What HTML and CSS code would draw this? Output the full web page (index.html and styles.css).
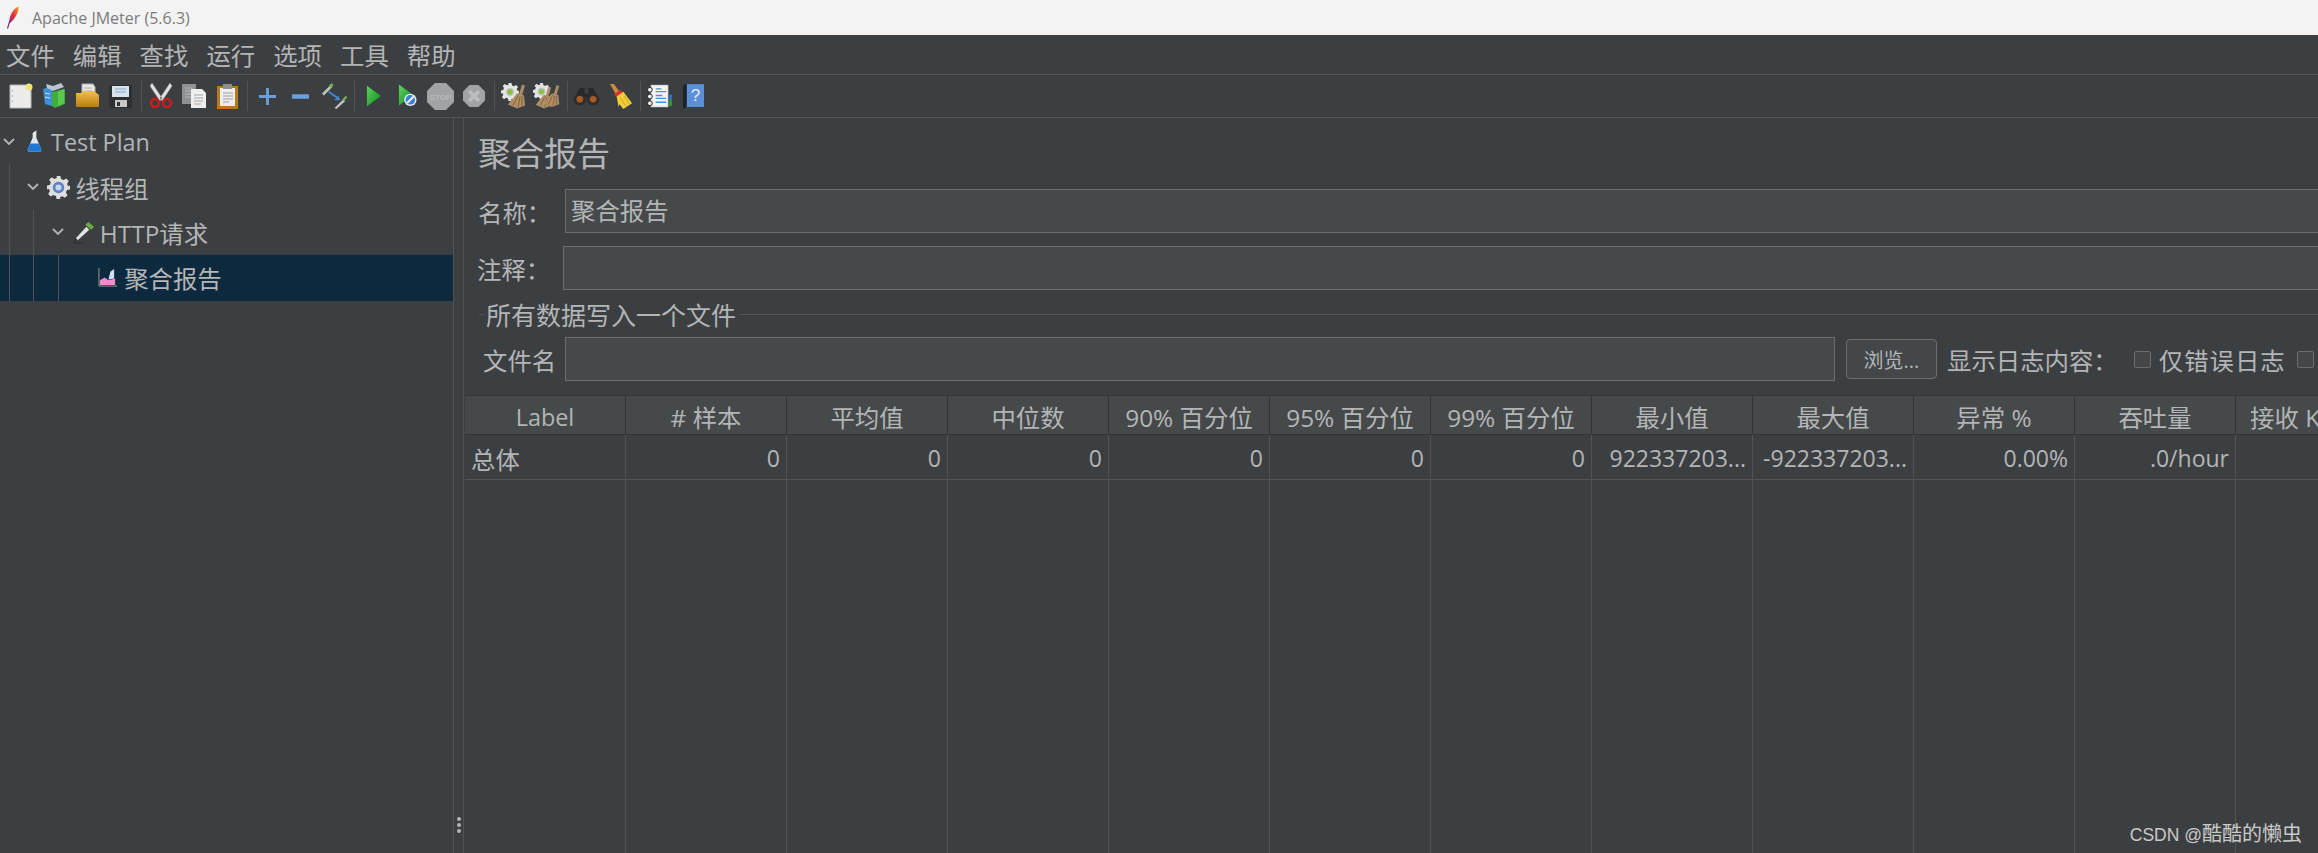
FILE: index.html
```html
<!DOCTYPE html>
<html>
<head>
	<meta charset="utf-8">
	<meta name="viewport" content="width=device-width, initial-scale=1">
	<title>Apache JMeter (5.6.3)</title>
	<link rel="stylesheet" href="styles.css">
</head>
<body>
	<svg class="defs" width="0" height="0">
		<defs>
			<linearGradient id="feather" x1="1" y1="0" x2="0" y2="1">
				<stop offset="0" stop-color="#f6a623"/>
				<stop offset="0.5" stop-color="#e8323c"/>
				<stop offset="1" stop-color="#8e2a8c"/>
			</linearGradient>
			<linearGradient id="play" x1="0" y1="0" x2="1" y2="1">
				<stop offset="0" stop-color="#5fd35f"/>
				<stop offset="1" stop-color="#0a8a1e"/>
			</linearGradient>
			<linearGradient id="folder" x1="0" y1="0" x2="0" y2="1">
				<stop offset="0" stop-color="#f2c04e"/>
				<stop offset="1" stop-color="#b97c12"/>
			</linearGradient>
			<symbol id="gear" viewBox="0 0 24 24">
				<path d="M10 0h4l.7 3.200 2.600 1.100 2.700-1.800 2.800 2.800-1.800 2.700 1.100 2.600L24 10v4l-3.200.7-1.100 2.600 1.800 2.700-2.800 2.800-2.700-1.800-2.600 1.100L14 24h-4l-.7-3.200-2.600-1.100L4 21.500 1.200 18.700 3 16l-1.100-2.600L0 14v-4l2.900-.7L4 6.700 2.200 4 5 1.200l2.700 1.800 2.600-1.100z" fill="#e4e4e4"/>
				<circle cx="12" cy="12" r="5.500" fill="#c4c4c4"/>
				<circle cx="12" cy="12" r="3.600" fill="#86c440"/>
			</symbol>
			<symbol id="besom" viewBox="0 0 24 24">
				<path d="M18 0l3 1-3 10-3-1z" fill="#a98a62"/>
				<path d="M13 9l7 2 1 10-8 3-9-4z" fill="#b08d64"/>
				<path d="M14 11l-5 10M16 12l-2 11M18 12l0 10" stroke="#7f6440" fill="none"/>
			</symbol>
		</defs>
	</svg>

	<div class="titlebar">
		<svg class="titlebar-icon" viewBox="0 0 14 24" width="14" height="24"><path d="M12.500 0.500C8 2 4.500 8 3.500 13c-.4 2-.6 3.500-.3 4.500C6 16 9 12 11 8c1-2 2-5 1.500-7.500z" fill="url(#feather)"/><path d="M3.800 15L1.500 22.500" stroke="#7a2a88" stroke-width="1.200" fill="none"/></svg>
		<span>Apache JMeter (5.6.3)</span>
	</div>

	<div class="menubar">
		<span>文件</span><span>编辑</span><span>查找</span><span>运行</span><span>选项</span><span>工具</span><span>帮助</span>
	</div>

	<div class="toolbar">
		<!-- new -->
		<div class="tool"><svg viewBox="0 0 24 26" width="24" height="26"><path d="M1 2h21v23H1z" fill="#ececec" stroke="#b5b5b5"/><circle cx="20" cy="4" r="3.500" fill="#f4e27a"/><path d="M3 8h1M3 13h1M3 18h1" stroke="#888"/></svg></div>
		<!-- templates -->
		<div class="tool"><svg viewBox="0 0 24 26" width="24" height="26"><path d="M1 6l9-3v20L3 21z" fill="#3f8fd6"/><path d="M10 9l13-3v15l-10 4-3-2z" fill="#3fae3a"/><path d="M16 8l6-2v14l-6 3z" fill="#5cc84f"/><path d="M4 1l7 2 8-3 3 4-11 4-6-3z" fill="#b9c6d2"/><path d="M3 10l5 1M3 14l5 1" stroke="#bfe0f7"/></svg></div>
		<!-- open -->
		<div class="tool"><svg viewBox="0 0 26 26" width="26" height="26"><path d="M7 1h11l2 3v9H7z" fill="#e8e8e8" stroke="#b0b0b0"/><path d="M9 5h8M9 8h8" stroke="#aaa"/><path d="M1 10h5l2-2h11l5 4v11a1 1 0 0 1-1 1H2a1 1 0 0 1-1-1z" fill="url(#folder)"/></svg></div>
		<!-- save -->
		<div class="tool"><svg viewBox="0 0 24 26" width="24" height="26"><path d="M0 2h23v23H2l-2-2z" fill="#2e2f31"/><path d="M3 3h17v11H3z" fill="#d9e3ee"/><path d="M6 6h11M6 9h11" stroke="#7fa8cf"/><path d="M6 17h12v7H6z" fill="#c9c9c9"/><path d="M8 19h3v4H8z" fill="#333"/></svg></div>
		<div class="tool-sep"></div>
		<!-- cut -->
		<div class="tool"><svg viewBox="0 0 24 26" width="24" height="26"><path d="M3 0l10 15-2 3L1 3zM21 0L11 15l2 3L23 3z" fill="#e2e2e2" stroke="#999" stroke-width=".5"/><circle cx="6" cy="20" r="4" fill="none" stroke="#d01a1a" stroke-width="2.400"/><circle cx="18" cy="20" r="4" fill="none" stroke="#d01a1a" stroke-width="2.400"/></svg></div>
		<!-- copy -->
		<div class="tool"><svg viewBox="0 0 26 26" width="26" height="26"><path d="M1 1h14v20H1z" fill="#8e9092"/><path d="M4 5h8M4 8h8M4 11h8M4 14h8" stroke="#b4b5b6"/><path d="M10 6h11l4 4v15H10z" fill="#eeeeee"/><path d="M13 12h9M13 15h9M13 18h9M13 21h7" stroke="#a8a8a8"/></svg></div>
		<!-- paste -->
		<div class="tool"><svg viewBox="0 0 22 26" width="22" height="26"><path d="M0 3h21v23H0z" fill="#b8791f"/><path d="M3 5h15v18H3z" fill="#ededed"/><path d="M6 1h9v5H6z" fill="#8d8f91"/><path d="M6 10h10M6 13h10M6 16h10M6 19h6" stroke="#9d9d9d"/></svg></div>
		<div class="tool-sep"></div>
		<!-- add, remove, toggle -->
		<div class="tool"><svg viewBox="0 0 18 18" width="17" height="17"><path d="M7.500 0h3v7.500H18v3h-7.500V18h-3v-7.500H0v-3h7.500z" fill="#6ca0dc"/></svg></div>
		<div class="tool"><svg viewBox="0 0 18 5" width="17" height="5"><rect width="18" height="5" rx="1" fill="#6ca0dc"/></svg></div>
		<div class="tool"><svg viewBox="0 0 28 28" width="27" height="27"><path d="M1 11l9-9 2 2-9 9z" fill="#b9c7b0"/><path d="M8 3l3-3 2 2-3 3z" fill="#7ea85a"/><path d="M14 26l9-9 2 2-9 8z" fill="#c3c3c3"/><path d="M22 17l4-4 1 2-3 4z" fill="#7ea85a"/><path d="M8 9l10 7" stroke="#3f86d6" stroke-width="2"/><path d="M20 18l-6 0 4-5z" fill="#3f86d6"/></svg></div>
		<div class="tool-sep"></div>
		<!-- start, start no pauses, stop, shutdown -->
		<div class="tool"><svg viewBox="0 0 16 22" width="15" height="22"><path d="M1 0l15 11L1 22z" fill="url(#play)"/></svg></div>
		<div class="tool"><svg viewBox="0 0 20 24" width="19" height="24"><path d="M1 0l15 11L1 22z" fill="url(#play)"/><circle cx="13" cy="16" r="6.500" fill="#e6edf6"/><circle cx="13" cy="16" r="5" fill="#3f80d6"/><path d="M9.500 19.500l7-7" stroke="#f4f4f4" stroke-width="2"/></svg></div>
		<div class="tool"><svg viewBox="0 0 27 27" width="27" height="27"><path d="M8 0h11l8 8v11l-8 8H8l-8-8V8z" fill="#a2a3a4"/><text class="stop-text" x="13.500" y="17">STOP</text></svg></div>
		<div class="tool"><svg viewBox="0 0 22 22" width="22" height="22"><path d="M6.500 0h9L22 6.500v9L15.500 22h-9L0 15.500v-9z" fill="#a2a3a4"/><path d="M6 6l10 10M16 6L6 16" stroke="#bdbdbd" stroke-width="3.500"/></svg></div>
		<div class="tool-sep"></div>
		<!-- clear, clear all -->
		<div class="tool"><svg viewBox="0 0 26 26" width="26" height="26"><use href="#gear" x="0" y="0" width="18" height="18"/><use href="#besom" x="3" y="1" width="24" height="25"/></svg></div>
		<div class="tool"><svg viewBox="0 0 28 26" width="28" height="26"><use href="#gear" x="0" y="0" width="17" height="17"/><use href="#besom" x="-1" y="3" width="22" height="23"/><use href="#besom" x="7" y="0" width="22" height="26"/></svg></div>
		<div class="tool-sep"></div>
		<!-- search, reset search -->
		<div class="tool"><svg viewBox="0 0 28 20" width="27" height="19"><path d="M7 1h5v6h4V1h5l7 13H16v-3h-4v3H0z" fill="#26282a"/><circle cx="7" cy="13" r="6.500" fill="#2d2d2d"/><circle cx="21" cy="13" r="6.500" fill="#2d2d2d"/><circle cx="7" cy="13" r="3.500" fill="#a75a23"/><circle cx="21" cy="13" r="3.500" fill="#a75a23"/></svg></div>
		<div class="tool"><svg viewBox="0 0 26 28" width="25" height="27"><path d="M2 1h4l7 9-4 3z" fill="#c88d3c"/><path d="M6 12l7-5 3 3-6 5z" fill="#d62f2f"/><path d="M9 14l7-5 9 12-9 6-4-5-1 3z" fill="#f0cf3a"/><path d="M13 15l6 10M17 13l5 9" stroke="#c9a41e"/></svg></div>
		<div class="tool-sep"></div>
		<!-- function helper, help -->
		<div class="tool"><svg viewBox="0 0 26 26" width="25" height="25"><path d="M4 1h18v23H4z" fill="#f4f4f4" stroke="#999" stroke-width=".5"/><path d="M9 5h6M9 8h11M9 12h7M9 15h11M9 19h11" stroke="#4a8fdc" stroke-width="1.400"/><circle cx="3" cy="6" r="2.500" fill="#eee" stroke="#222"/><circle cx="3" cy="13" r="2.500" fill="#eee" stroke="#222"/><circle cx="3" cy="20" r="2.500" fill="#eee" stroke="#222"/><path d="M23 11h3v6h-3z" fill="#2d6fc0"/><path d="M23 17h3v6h-3z" fill="#2a9a3a"/></svg></div>
		<div class="tool"><svg viewBox="0 0 22 26" width="21" height="25"><path d="M0 2l3-2h19v24H3l-3 2z" fill="#1e2226"/><path d="M4 0h18v24H4z" fill="#5b8fd6"/><text class="help-text" x="13" y="18">?</text></svg></div>
	</div>

	<div class="main">
		<div class="tree">
			<div class="tree-row">
				<span class="chevron"><svg viewBox="0 0 12 8" width="12" height="8"><path d="M1 1l5 5 5-5" fill="none" stroke="#b4b4b4" stroke-width="1.800"/></svg></span>
				<span class="node-icon"><svg viewBox="0 0 16 24" width="15" height="23"><path d="M6 3l4-3v8l5 12a2 2 0 0 1-2 3H3a2 2 0 0 1-2-3L6 8z" fill="#e3e6e8"/><path d="M3.500 14h9l2.500 6a2 2 0 0 1-2 3H3a2 2 0 0 1-2-3z" fill="#1f78d8"/></svg></span>
				<span class="node-label latin">Test Plan</span>
			</div>
			<div class="tree-row">
				<span class="guide"></span>
				<span class="chevron"><svg viewBox="0 0 12 8" width="12" height="8"><path d="M1 1l5 5 5-5" fill="none" stroke="#b4b4b4" stroke-width="1.800"/></svg></span>
				<span class="node-icon"><svg viewBox="0 0 24 24" width="23" height="23"><path d="M10 0h4l.7 3.200 2.600 1.100 2.700-1.800 2.800 2.800-1.800 2.700 1.100 2.600L24 10v4l-3.200.7-1.100 2.600 1.800 2.700-2.800 2.800-2.700-1.800-2.600 1.100L14 24h-4l-.7-3.200-2.600-1.100L4 21.500 1.200 18.700 3 16l-1.100-2.600L0 14v-4l2.900-.7L4 6.700 2.200 4 5 1.200l2.700 1.800 2.600-1.100z" fill="#dedede"/><circle cx="12" cy="12" r="6" fill="#5d83c4"/><circle cx="12" cy="12" r="3.200" fill="#c4d8f2"/></svg></span>
				<span class="node-label">线程组</span>
			</div>
			<div class="tree-row">
				<span class="guide"></span><span class="guide"></span>
				<span class="chevron"><svg viewBox="0 0 12 8" width="12" height="8"><path d="M1 1l5 5 5-5" fill="none" stroke="#b4b4b4" stroke-width="1.800"/></svg></span>
				<span class="node-icon"><svg viewBox="0 0 24 24" width="23" height="23"><path d="M17 1l6 5-3 3-6-5z" fill="#6fa83f"/><path d="M15 6l3 3L6 20l-2-2z" fill="#e2e2e2"/><path d="M4 18l2 2-5 2z" fill="#333"/><path d="M1 23h11" stroke="#2e3133" stroke-width="1.500"/></svg></span>
				<span class="node-label">HTTP请求</span>
			</div>
			<div class="tree-row selected">
				<span class="guide"></span><span class="guide"></span><span class="guide"></span>
				<span class="chevron"></span>
				<span class="node-icon"><svg viewBox="0 0 20 20" width="19" height="19"><path d="M1 0v19h19" fill="none" stroke="#9a9a9a"/><path d="M2 18v-5l5-3 4 3 7-2v7z" fill="#f08ccb"/><path d="M11 12l2-8 4-3v10z" fill="#cfe0f7"/></svg></span>
				<span class="node-label">聚合报告</span>
			</div>
		</div>

		<div class="splitter">
			<span class="grip"></span><span class="grip"></span><span class="grip"></span>
		</div>

		<div class="content">
			<div class="page-title">聚合报告</div>

			<div class="form-row name-row">
				<label class="name-label">名称：</label>
				<div class="text-field">聚合报告</div>
			</div>
			<div class="form-row comment-row">
				<label class="comment-label">注释：</label>
				<div class="text-field"></div>
			</div>

			<div class="group-title">
				<span class="group-line-short"></span>
				<span class="group-text">所有数据写入一个文件</span>
				<span class="group-line"></span>
			</div>

			<div class="form-row file-row">
				<label class="file-label">文件名</label>
				<div class="text-field file-field"></div>
				<button class="browse-btn">浏览...</button>
				<span class="log-label">显示日志内容：</span>
				<span class="check"></span>
				<span class="check-text">仅错误日志</span>
				<span class="check check-second"></span>
				<span class="check-text">仅成功日志</span>
			</div>

			<table class="report">
				<thead>
					<tr>
						<th class="latin">Label</th>
						<th># 样本</th>
						<th>平均值</th>
						<th>中位数</th>
						<th>90% 百分位</th>
						<th>95% 百分位</th>
						<th>99% 百分位</th>
						<th>最小值</th>
						<th>最大值</th>
						<th>异常 %</th>
						<th>吞吐量</th>
						<th>接收 KB/sec</th>
						<th>发送 KB/sec</th>
					</tr>
				</thead>
				<tbody>
					<tr class="total-row">
						<td class="first-col">总体</td>
						<td>0</td>
						<td>0</td>
						<td>0</td>
						<td>0</td>
						<td>0</td>
						<td>0</td>
						<td>922337203...</td>
						<td>-922337203...</td>
						<td>0.00%</td>
						<td>.0/hour</td>
						<td></td>
						<td></td>
					</tr>
					<tr class="filler-row">
						<td></td><td></td><td></td><td></td><td></td><td></td><td></td><td></td><td></td><td></td><td></td><td></td><td></td>
					</tr>
				</tbody>
			</table>
		</div>
	</div>

	<div class="watermark">CSDN @<span class="watermark-name">酷酷的懒虫</span></div>
</body>
</html>
```

FILE: styles.css
```css
html, body {
    margin: 0;
    height: 100%;
    overflow: hidden;
}
body {
    display: flex;
    flex-direction: column;
    background-color: #3c3f41;
    color: #b3b5b6;
    font-family: "Open Sans", "Noto Sans CJK SC", sans-serif;
    font-size: 24.4px;
    font-weight: 400;
}
.defs {
    position: absolute;
}
.latin {
    font-size: 23.4px;
}

.titlebar {
    display: flex;
    align-items: center;
    flex: none;
    height: 35px;
    padding-left: 6px;
    background-color: #f3f3f3;
    color: #7c7c7c;
    font-size: 16px;
}
.titlebar-icon {
    margin-right: 12px;
}

.menubar {
    display: flex;
    flex: none;
    align-items: center;
    height: 39px;
    padding-left: 6px;
    gap: 18px;
    border-bottom: 1px solid #515456;
}

.toolbar {
    display: flex;
    flex: none;
    align-items: center;
    height: 42px;
    padding-left: 4px;
    border-bottom: 1px solid #515456;
}
.tool {
    display: flex;
    align-items: center;
    justify-content: center;
    flex: none;
    width: 33.500px;
    height: 30px;
}
.tool-sep {
    flex: none;
    width: 1px;
    height: 30px;
    margin: 0 2.500px;
    background-color: #515456;
}
.stop-text {
    fill: #b8b8b8;
    font-family: "Liberation Sans", sans-serif;
    font-size: 8px;
    font-weight: 700;
    text-anchor: middle;
}
.help-text {
    fill: #e6eefa;
    font-family: "Liberation Sans", sans-serif;
    font-size: 18px;
    text-anchor: middle;
}

.main {
    display: flex;
    flex: 1;
    min-height: 0;
}

.tree {
    flex: none;
    width: 453px;
    padding-top: 1px;
    border-right: 1px solid #515456;
}
.tree-row {
    display: flex;
    align-items: center;
    height: 45.400px;
    padding-left: 9px;
}
.tree-row.selected {
    background-color: #0d293e;
}
.guide {
    flex: none;
    align-self: stretch;
    width: 23.400px;
    border-left: 1px solid #515456;
}
.chevron {
    display: flex;
    align-items: center;
    justify-content: center;
    flex: none;
    width: 18px;
    margin-left: -9px;
}
.node-icon {
    display: flex;
    align-items: center;
    justify-content: center;
    flex: none;
    width: 25px;
    margin-left: 4px;
    margin-right: 4px;
}
.node-label {
    white-space: nowrap;
}

.splitter {
    display: flex;
    flex-direction: column;
    align-items: center;
    justify-content: flex-end;
    flex: none;
    width: 10px;
    padding-bottom: 20px;
    gap: 2px;
    box-sizing: border-box;
    border-right: 1px solid #515456;
}
.grip {
    width: 4px;
    height: 4px;
    border-radius: 50%;
    background-color: #b5b5b5;
}

.content {
    flex: 1;
    min-width: 0;
    overflow: hidden;
}
.page-title {
    height: 71px;
    padding-left: 14px;
    font-size: 33px;
    line-height: 71px;
}
.form-row {
    display: flex;
    align-items: center;
    height: 44px;
    white-space: nowrap;
}
.text-field {
    flex: 1;
    box-sizing: border-box;
    height: 100%;
    margin-right: -4px;
    padding-left: 5px;
    border: 1px solid #6b6e70;
    background-color: #45494a;
    line-height: 42px;
}
.name-row {
    padding-left: 14px;
}
.name-label {
    flex: none;
    width: 87px;
}
.comment-row {
    margin-top: 13px;
    padding-left: 13px;
}
.comment-label {
    flex: none;
    width: 86px;
}

.group-title {
    display: flex;
    align-items: center;
    height: 24px;
    margin-top: 12px;
    padding-left: 15px;
}
.group-line-short {
    flex: none;
    width: 5px;
    height: 1px;
    background-color: #515456;
}
.group-text {
    padding: 0 3px 0 2px;
    font-size: 25px;
    white-space: nowrap;
}
.group-line {
    flex: 1;
    height: 1px;
    background-color: #515456;
}

.file-row {
    margin-top: 11px;
    padding-left: 19px;
}
.file-label {
    flex: none;
    width: 82px;
}
.file-field {
    flex: none;
    width: 1270px;
    margin-right: 0;
}
.browse-btn {
    flex: none;
    width: 91px;
    height: 40px;
    margin-left: 11px;
    padding: 0;
    border: 1px solid #6b6e70;
    border-radius: 4px;
    background-color: #43474a;
    color: #b3b5b6;
    font-family: inherit;
    font-size: 20px;
}
.log-label {
    flex: none;
    margin-left: 10px;
}
.check {
    flex: none;
    box-sizing: border-box;
    width: 17px;
    height: 17px;
    margin-left: 16px;
    border: 1px solid #6b6e70;
    border-radius: 2px;
    background-color: #43474a;
}
.check-text {
    flex: none;
    width: 124px;
    margin-left: 8px;
    letter-spacing: 1px;
}
.check-second {
    margin-left: 14px;
}

.report {
    width: 2093px;
    margin-top: 14px;
    margin-left: 1px;
    border-collapse: separate;
    border-spacing: 0;
    table-layout: fixed;
}
.report th {
    box-sizing: border-box;
    height: 39px;
    padding: 3px 0 0;
    border-top: 1px solid #323537;
    border-right: 1px solid #323537;
    border-bottom: 1px solid #323537;
    background-color: #45494a;
    font-weight: 400;
    text-align: center;
    white-space: nowrap;
}
.report th.latin {
    font-size: 23.400px;
}
.report td {
    box-sizing: border-box;
    padding: 2px 6px 0;
    border-right: 1px solid #515456;
    font-size: 23px;
    text-align: right;
    white-space: nowrap;
}
.total-row td {
    height: 45px;
    border-bottom: 1px solid #515456;
}
.report .first-col {
    font-size: 24.400px;
    text-align: left;
}
.filler-row td {
    height: 373px;
}

.watermark {
    position: absolute;
    right: 16px;
    bottom: 6px;
    color: #c9c9c9;
    font-family: "Liberation Sans", "Noto Sans CJK SC", sans-serif;
    font-size: 17.500px;
}
.watermark-name {
    font-size: 20px;
}
```
